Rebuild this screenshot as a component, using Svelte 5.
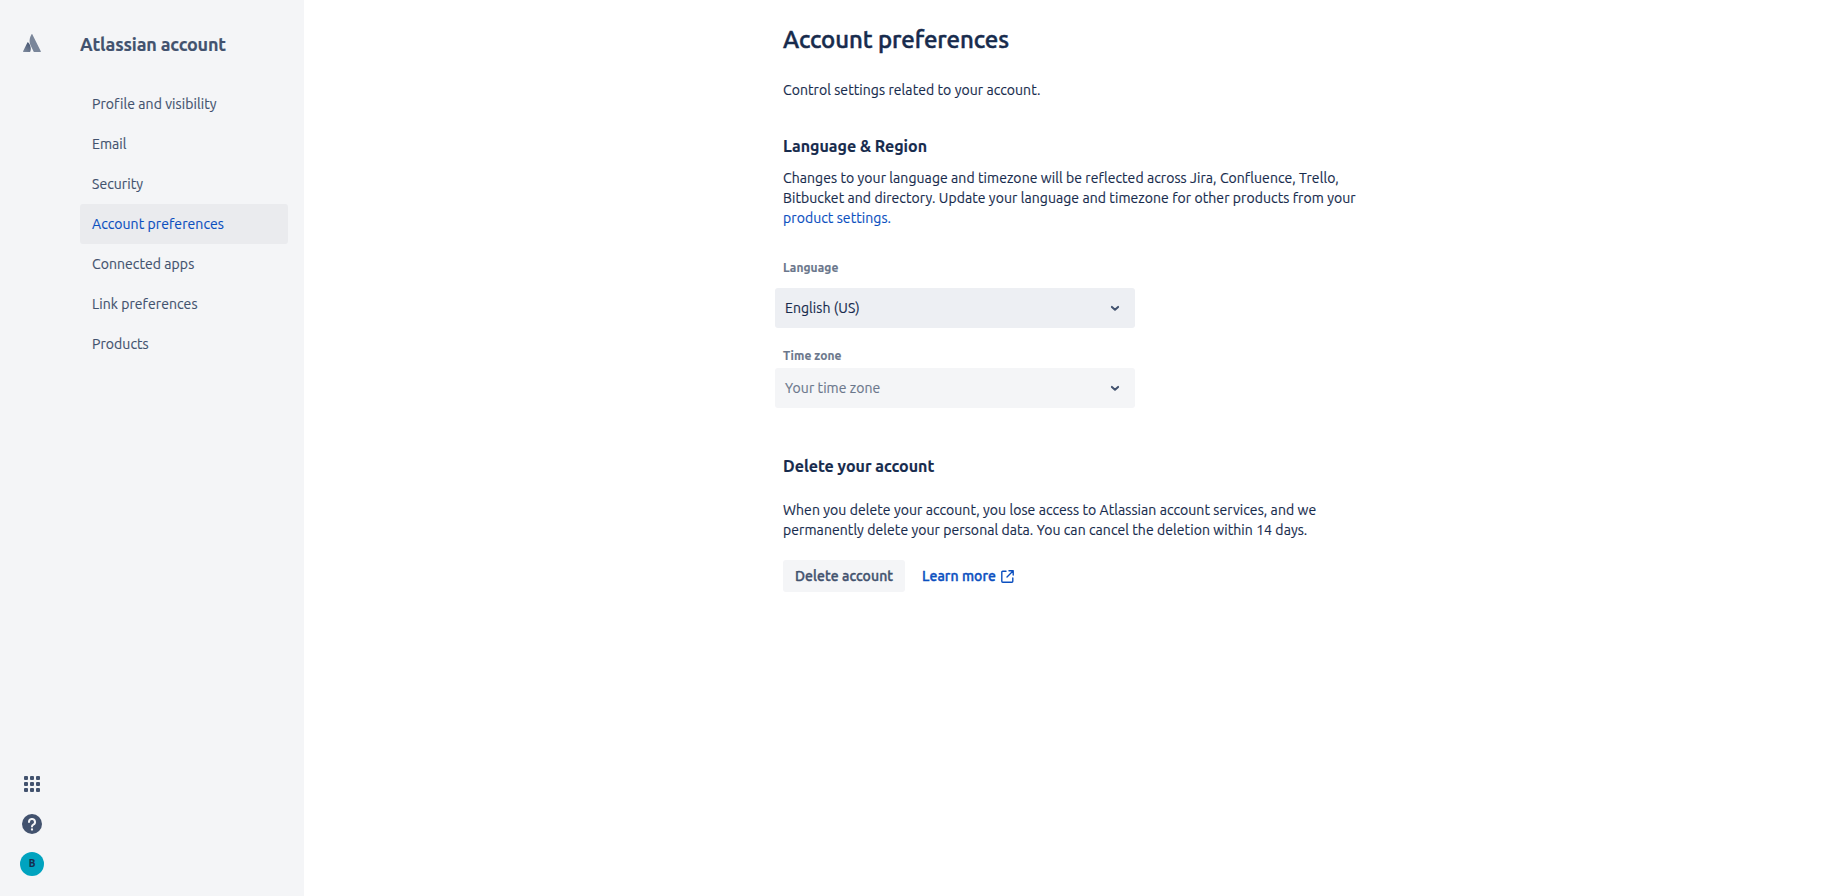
<script>
  const items = [
    'Profile and visibility',
    'Email',
    'Security',
    'Account preferences',
    'Connected apps',
    'Link preferences',
    'Products'
  ];
  let active = $state('Account preferences');
  const dots = [0, 6, 12];
</script>

{#snippet chevron()}
  <svg width="24" height="24" viewBox="0 0 24 24" aria-hidden="true">
    <path d="M8.9 10.9 12 13.7 15.1 10.9" fill="none" stroke="#42526e" stroke-width="2" stroke-linecap="round" stroke-linejoin="round" />
  </svg>
{/snippet}

<div class="page">
  <aside>
    <div class="rail">
      <svg class="logo" width="18" height="18" viewBox="0 0 18 18" aria-hidden="true">
        <defs>
          <linearGradient id="leg" x1="0.8" y1="0" x2="0.3" y2="1">
            <stop offset="0" stop-color="#42526e" />
            <stop offset="1" stop-color="#7a869a" />
          </linearGradient>
        </defs>
        <path d="M5.2 8.4c-.2-.3-.6-.3-.8.1L.1 17.2c-.2.4 0 .8.5.8h6.1c.2 0 .4-.1.5-.3 1.300-2.700.5-6.900-2-9.300z" fill="url(#leg)" />
        <path d="M8.500.4C6 4.200 6.200 8.500 7.800 11.800l2.900 5.900c.1.200.3.300.5.300h6.100c.5 0 .7-.4.500-.8L9.400.4c-.2-.4-.7-.4-.9 0z" fill="#7a869a" />
      </svg>
      <div class="tools">
        <svg width="16" height="16" viewBox="0 0 16 16" aria-hidden="true">
          {#each dots as y}
            {#each dots as x}
              <rect {x} {y} width="4" height="4" rx="1" fill="#42526e" />
            {/each}
          {/each}
        </svg>
        <svg width="20" height="20" viewBox="0 0 20 20" aria-hidden="true">
          <circle cx="10" cy="10" r="10" fill="#42526e" />
          <path d="M7 8a3 3 0 1 1 4.300 2.700c-.8.400-1.300.800-1.300 1.800" fill="none" stroke="#f4f5f7" stroke-width="2" stroke-linecap="round" />
          <circle cx="10" cy="15.500" r="1.150" fill="#f4f5f7" />
        </svg>
        <div class="avatar">B</div>
      </div>
    </div>
    <div class="menu">
      <div class="title">Atlassian account</div>
      <nav>
        {#each items as item}
          <button class="item" class:active={item === active} onclick={() => (active = item)}>{item}</button>
        {/each}
      </nav>
    </div>
  </aside>

  <main>
    <div class="content">
      <h1>Account preferences</h1>
      <p class="intro">Control settings related to your account.</p>

      <h2 class="region">Language &amp; Region</h2>
      <p class="regiontext">
        Changes to your language and timezone will be reflected across Jira, Confluence, Trello,<br />
        Bitbucket and directory. Update your language and timezone for other products from your<br />
        <a href="#settings">product settings.</a>
      </p>

      <div class="label lang">Language</div>
      <div class="select filled"><span>English (US)</span>{@render chevron()}</div>
      <div class="label zone">Time zone</div>
      <div class="select"><span>Your time zone</span>{@render chevron()}</div>

      <h2 class="delete">Delete your account</h2>
      <p class="deletetext">
        When you delete your account, you lose access to Atlassian account services, and we<br />
        permanently delete your personal data. You can cancel the deletion within 14 days.
      </p>
      <div class="actions">
        <button class="remove">Delete account</button>
        <a class="more" href="#more">
          <span>Learn more</span>
          <svg width="13" height="13" viewBox="0 0 13 13" aria-hidden="true">
            <path d="M5 1.200H1.700a.9.900 0 0 0-.9.900v9.200c0 .5.400.9.900.9h9.200c.5 0 .9-.4.900-.9V8M8 .8h4.200V5M12 1 6 7" fill="none" stroke="#0b4fbf" stroke-width="1.400" stroke-linecap="round" stroke-linejoin="round" />
          </svg>
        </a>
      </div>
    </div>
  </main>
</div>

<style>
  :global(body) { margin: 0; background: #fff; }
  .page {
    display: flex;
    height: 896px;
    overflow: hidden;
    font-family: Ubuntu, "Noto Sans", "Open Sans", sans-serif;
    font-size: 14px;
    line-height: 20px;
    color: #172b4d;
    letter-spacing: 0.075px;
    white-space: nowrap;
    -webkit-text-stroke: 0.15px currentColor;
  }
  button { border: 0; font: inherit; letter-spacing: inherit; cursor: pointer; }
  a { color: #0b4fbf; text-decoration: none; }
  h1, h2, p { margin: 0; }
  aside { width: 304px; flex: none; display: flex; background: #f4f5f7; color: #42526e; }
  .rail {
    width: 64px;
    box-sizing: border-box;
    padding: 34px 0 20px;
    display: flex;
    flex-direction: column;
    align-items: center;
    justify-content: space-between;
  }
  .tools { display: flex; flex-direction: column; align-items: center; }
  .tools svg:nth-child(1) { margin-bottom: 22px; }
  .tools svg:nth-child(2) { margin-bottom: 18px; }
  .avatar {
    width: 24px;
    height: 24px;
    border-radius: 50%;
    background: #00a3bf;
    color: #172b4d;
    font-size: 10px;
    font-weight: 700;
    line-height: 24px;
    text-align: center;
  }
  .menu { padding: 32px 16px 0; width: 208px; }
  .title { font-size: 18px; font-weight: 700; line-height: 24px; letter-spacing: -0.17px; }
  nav { margin-top: 28px; display: flex; flex-direction: column; }
  .item {
    height: 40px;
    padding: 0 12px;
    border-radius: 3px;
    background: transparent;
    color: #42526e;
    text-align: left;
  }
  .item.active { background: #eaebee; color: #0b4fbf; }
  main { flex: 1; display: flex; justify-content: center; }
  .content { width: 584px; padding: 0 8px; }
  h1 {
    margin-top: 26px;
    font-size: 24px;
    line-height: 28px;
    font-weight: 500;
    letter-spacing: -0.1px;
    -webkit-text-stroke-width: 0.5px;
  }
  .intro { margin-top: 26px; }
  h2 { font-size: 16px; line-height: 20px; font-weight: 700; letter-spacing: 0; }
  .region { margin-top: 36px; }
  .regiontext { margin-top: 12px; }
  .label { color: #6b778c; font-size: 12px; line-height: 16px; font-weight: 600; }
  .lang { margin-top: 32px; }
  .zone { margin-top: 20px; }
  .select {
    width: 342px;
    height: 40px;
    margin: 4px 0 0 -8px;
    padding: 0 8px 0 10px;
    display: flex;
    align-items: center;
    justify-content: space-between;
    border-radius: 3px;
    background: #f4f5f7;
    color: #6b778c;
  }
  .select.filled { margin-top: 12px; background: #edeff3; color: #172b4d; }
  .delete { margin-top: 48px; }
  .deletetext { margin-top: 24px; }
  .actions {
    margin-top: 20px;
    display: flex;
    align-items: center;
    font-weight: 500;
    -webkit-text-stroke-width: 0.4px;
  }
  .remove {
    width: 122px;
    height: 32px;
    padding: 0 12px;
    border-radius: 3px;
    background: #f4f5f7;
    color: #42526e;
    text-align: left;
  }
  .more { margin-left: 17px; display: flex; align-items: center; gap: 5px; }
</style>
